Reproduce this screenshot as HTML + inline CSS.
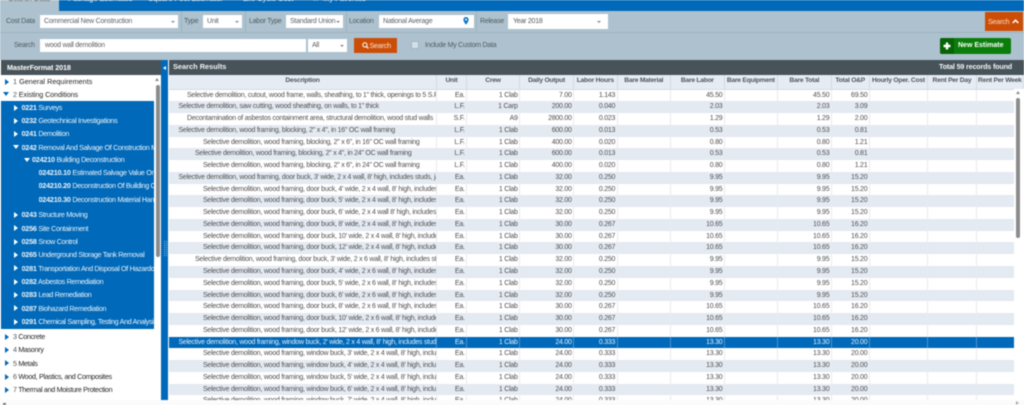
<!DOCTYPE html>
<html><head><meta charset="utf-8">
<style>
*{box-sizing:border-box}
html,body{margin:0;padding:0;width:1024px;height:405px;overflow:hidden;background:#fbfbfb}
body{font-family:"Liberation Sans",sans-serif;font-size:7px;letter-spacing:-.24px;color:#4f4f4f}
#w{position:absolute;left:0;top:0;width:1024px;height:405px;overflow:hidden;filter:blur(.4px)}
.a{position:absolute;white-space:nowrap}
.f{background:#fff;color:#5f5f5f;padding-left:4px;display:flex;align-items:center}
.c{position:absolute;right:3px;top:50%;margin-top:-1px;border:2px solid transparent;border-top:2.5px solid #888;border-bottom:0}
.l{color:#4f5a61;margin-top:1.5px}
.t{position:absolute;white-space:nowrap;font-size:7.2px;letter-spacing:-.33px;line-height:10px;height:10px;color:#262626}
.t b{font-weight:bold;letter-spacing:-.2px}
.t u{text-decoration:none;color:#555}
.ar{position:absolute;width:0;height:0;border:3px solid transparent;border-left:4px solid #0069b9;border-right:0}
.ad{position:absolute;width:0;height:0;border:3.5px solid transparent;border-top:4px solid #0069b9;border-bottom:0}
.wr{border-left-color:#fff}.wd{border-top-color:#fff}
#g{position:absolute;left:169px;top:75px;width:855px;height:325px;overflow:hidden}
.r{display:grid;grid-template-columns:268px 30px 53px 54px 43.5px 53.5px 53.7px 53.3px 53.7px 38px 58.5px 48.5px 47.3px;height:11.77px;line-height:11.77px;background:#fff;color:#505050}
.r:nth-child(even){background:#fff}
.r:nth-child(odd){background:#e4eaf2}
.r>*{display:block;font-style:normal;font-weight:normal;text-align:right;padding-right:1.3px;border-right:1px solid #e8ebef;overflow:hidden;white-space:nowrap}
.r>b{text-align:left;padding-right:0}
.h{height:14.5px!important;line-height:12.4px!important;background:#e6ecf4!important;color:#4d565c;border-bottom:1px solid #d5dbe2}
.h>*{text-align:center!important;font-weight:bold!important;padding:0!important;border-right:1px solid #d3d9e0;font-size:6.7px}
.s{background:#0069b9!important;color:#e4eef7!important}
.s>*{border-right-color:#4a93cc}
</style></head><body><div id="w">

<div class="a" style="left:0;top:0;width:1024px;height:11px;background:#0069b9"></div>
<div class="a" style="left:0;top:0;width:59px;height:11px;background:#adc2ce"></div>
<div class="a" style="left:8px;top:-6px;font-size:8px;line-height:9px;color:#444">Search Data</div>
<div class="a" style="left:68px;top:-6px;font-size:8px;line-height:9px;color:#dce9f4">Package Estimates</div>
<div class="a" style="left:148px;top:-6px;font-size:8px;line-height:9px;color:#dce9f4">Square Foot Estimator</div>
<div class="a" style="left:243px;top:-6px;font-size:8px;line-height:9px;color:#dce9f4">Life Cycle Cost</div>
<div class="a" style="left:312px;top:-6px;font-size:8px;line-height:9px;color:#dce9f4">★ &nbsp;My Favorites</div>

<div class="a" style="left:0;top:11px;width:1024px;height:49px;background:#adc2ce"></div>
<div class="a" style="left:0;top:32px;width:1024px;height:1px;background:#9cb4c1"></div>
<div class="a" style="left:181px;top:11px;width:1px;height:21px;background:#9cb4c1"></div>
<div class="a" style="left:245px;top:11px;width:1px;height:21px;background:#9cb4c1"></div>
<div class="a" style="left:346px;top:11px;width:1px;height:21px;background:#9cb4c1"></div>
<div class="a" style="left:476px;top:11px;width:1px;height:21px;background:#9cb4c1"></div>

<div class="a l" style="left:6px;top:14px;line-height:12px">Cost Data</div>
<div class="a f" style="left:40px;top:15px;width:138px;height:13px">Commercial New Construction<span class="c"></span></div>
<div class="a l" style="left:184px;top:14px;line-height:12px">Type</div>
<div class="a f" style="left:203px;top:15px;width:39px;height:13px">Unit<span class="c"></span></div>
<div class="a l" style="left:249px;top:14px;line-height:12px">Labor Type</div>
<div class="a f" style="left:286px;top:15px;width:57px;height:13px">Standard Union<span class="c"></span></div>
<div class="a l" style="left:349px;top:14px;line-height:12px">Location</div>
<div class="a f" style="left:379px;top:15px;width:95px;height:13px">National Average
<svg style="position:absolute;right:5px;top:2px" width="6" height="8" viewBox="0 0 6 8"><path d="M3 0a2.6 2.6 0 0 0-2.6 2.6C.4 4.6 3 7.6 3 7.6s2.6-3 2.6-5A2.6 2.6 0 0 0 3 0z" fill="#0a74c4"/><circle cx="3" cy="2.6" r="1" fill="#fff"/></svg></div>
<div class="a l" style="left:480px;top:14px;line-height:12px">Release</div>
<div class="a f" style="left:508px;top:14px;width:100px;height:15px;padding-left:5px;color:#555">Year 2018<span class="c" style="right:7px"></span></div>
<div class="a" style="left:985px;top:12px;width:38px;height:19px;background:#cc4e06;color:#f6d9c4;line-height:19px;font-size:7.2px;padding-left:3px">Search
<svg style="position:absolute;left:27px;top:7px" width="7" height="5" viewBox="0 0 7 5"><path d="M.7 4L3.5 1.2 6.3 4" fill="none" stroke="#fff" stroke-width="1.5"/></svg></div>

<div class="a l" style="left:14px;top:38.5px;line-height:12px">Search</div>
<div class="a f" style="left:40px;top:39px;width:266px;height:13px;padding-left:5px">wood wall demolition</div>
<div class="a f" style="left:308px;top:39px;width:39px;height:13px">All<span class="c"></span></div>
<div class="a" style="left:354px;top:38px;width:43px;height:15px;background:#cc4e06;color:#fbe4d4;line-height:15px;font-size:7.2px;padding-left:15.5px">Search
<svg style="position:absolute;left:8px;top:4px" width="7" height="7" viewBox="0 0 7 7"><circle cx="2.9" cy="2.9" r="2.1" fill="none" stroke="#fff" stroke-width="1"/><path d="M4.5 4.5L6.4 6.4" stroke="#fff" stroke-width="1.2"/></svg></div>
<div class="a" style="left:411px;top:41px;width:8px;height:8px;background:#d3dee6;border:1px solid #9fb6c4"></div>
<div class="a l" style="left:425px;top:38.5px;line-height:12px">Include My Custom Data</div>
<div class="a" style="left:940px;top:38px;width:71px;height:16px;background:#0a7d0a;border-radius:2px;color:#fff;font-weight:bold;letter-spacing:0;line-height:16px;padding-left:18px;font-size:7px">New Estimate
<div class="a" style="left:0;top:0;width:14px;height:16px;background:#066306;border-radius:2px 0 0 2px"></div>
<svg style="position:absolute;left:3px;top:4px" width="8" height="8" viewBox="0 0 8 8"><path d="M4 .5v7M.5 4h7" stroke="#fff" stroke-width="2.4"/></svg></div>

<!-- header bars -->
<div class="a" style="left:1px;top:60px;width:160px;height:15px;background:#475259;color:#fff;font-weight:bold;letter-spacing:-.1px;line-height:15px;padding-left:6px;font-size:7.2px">MasterFormat 2018</div>
<div class="a" style="left:169px;top:60px;width:855px;height:15px;background:#475259;color:#f2f5f6;font-weight:bold;letter-spacing:0;line-height:14px;padding-left:4px;font-size:7.4px">Search Results
<span class="a" style="right:12px;top:0;font-size:7.2px;letter-spacing:-.18px">Total 59 records found</span></div>

<!-- left tree -->
<div class="a" style="left:0;top:75px;width:161px;height:325px;background:#fff"></div>
<div class="a" style="left:1px;top:101px;width:153px;height:228px;background:#0069b9;overflow:hidden"></div>
<div class="a" style="left:161px;top:60px;width:7px;height:340px;background:#0069b9"></div>
<div class="a" style="left:163px;top:66px;width:0;height:0;border:2.5px solid transparent;border-right:3px solid #fff;border-left:0"></div>
<div class="a" style="left:164px;top:241px;width:1px;height:15px;border-left:1px dotted #7fb3dc"></div>
<div class="a" style="left:166px;top:241px;width:1px;height:15px;border-left:1px dotted #7fb3dc"></div>
<div class="a" style="left:155px;top:75px;width:6px;height:325px;background:#fff"></div>
<div class="a" style="left:155.5px;top:85px;width:4.5px;height:172px;background:#8b8b8b;border-radius:2px"></div>
<div class="a" style="left:155px;top:78px;width:0;height:0;border:2.2px solid transparent;border-bottom:3px solid #8b8b8b;border-top:0"></div>

<i class="ar" style="left:5px;top:79px"></i><div class="t" style="left:13px;top:77px;letter-spacing:.05px"><u>1</u> General Requirements</div>
<i class="ad" style="left:3px;top:92px"></i><div class="t" style="left:13px;top:90px;letter-spacing:-.1px"><u>2</u> Existing Conditions</div>

<i class="ar wr" style="left:14px;top:105px"></i><div class="t" style="left:21.5px;top:103px;color:#eaf3fa"><b>0221</b> Surveys</div>
<i class="ar wr" style="left:14px;top:118px"></i><div class="t" style="left:21.5px;top:116px;color:#eaf3fa"><b>0232</b> Geotechnical Investigations</div>
<i class="ar wr" style="left:14px;top:131px"></i><div class="t" style="left:21.5px;top:129px;color:#eaf3fa"><b>0241</b> Demolition</div>
<i class="ad wd" style="left:13px;top:145px"></i><div class="t" style="left:21.5px;top:143px;width:132px;overflow:hidden;color:#eaf3fa"><b>0242</b> Removal And Salvage Of Construction Materials</div>
<i class="ad wd" style="left:24px;top:158px"></i><div class="t" style="left:32px;top:155px;color:#eaf3fa"><b>024210</b> Building Deconstruction</div>
<div class="t" style="left:38.5px;top:167.5px;width:115px;overflow:hidden;color:#eaf3fa"><b>024210.10</b> Estimated Salvage Value Or Savings</div>
<div class="t" style="left:38.5px;top:181px;width:115px;overflow:hidden;color:#eaf3fa"><b>024210.20</b> Deconstruction Of Building Components</div>
<div class="t" style="left:38.5px;top:194.5px;width:115px;overflow:hidden;color:#eaf3fa"><b>024210.30</b> Deconstruction Material Handling</div>
<i class="ar wr" style="left:14px;top:212px"></i><div class="t" style="left:21.5px;top:210px;color:#eaf3fa"><b>0243</b> Structure Moving</div>
<i class="ar wr" style="left:14px;top:225px"></i><div class="t" style="left:21.5px;top:223.5px;color:#eaf3fa"><b>0256</b> Site Containment</div>
<i class="ar wr" style="left:14px;top:239px"></i><div class="t" style="left:21.5px;top:237px;color:#eaf3fa"><b>0258</b> Snow Control</div>
<i class="ar wr" style="left:14px;top:252px"></i><div class="t" style="left:21.5px;top:250px;color:#eaf3fa"><b>0265</b> Underground Storage Tank Removal</div>
<i class="ar wr" style="left:14px;top:265px"></i><div class="t" style="left:21.5px;top:263.5px;width:132px;overflow:hidden;color:#eaf3fa"><b>0281</b> Transportation And Disposal Of Hazardous Materials</div>
<i class="ar wr" style="left:14px;top:279px"></i><div class="t" style="left:21.5px;top:277px;color:#eaf3fa"><b>0282</b> Asbestos Remediation</div>
<i class="ar wr" style="left:14px;top:292px"></i><div class="t" style="left:21.5px;top:290px;color:#eaf3fa"><b>0283</b> Lead Remediation</div>
<i class="ar wr" style="left:14px;top:305px"></i><div class="t" style="left:21.5px;top:303.5px;color:#eaf3fa"><b>0287</b> Biohazard Remediation</div>
<i class="ar wr" style="left:14px;top:319px"></i><div class="t" style="left:21.5px;top:317px;width:132px;overflow:hidden;color:#eaf3fa"><b>0291</b> Chemical Sampling, Testing And Analysis</div>

<i class="ar" style="left:5px;top:334px"></i><div class="t" style="left:13px;top:332px"><u>3</u> Concrete</div>
<i class="ar" style="left:5px;top:347px"></i><div class="t" style="left:13px;top:345px"><u>4</u> Masonry</div>
<i class="ar" style="left:5px;top:360px"></i><div class="t" style="left:13px;top:358.5px"><u>5</u> Metals</div>
<i class="ar" style="left:5px;top:374px"></i><div class="t" style="left:13px;top:372px"><u>6</u> Wood, Plastics, and Composites</div>
<i class="ar" style="left:5px;top:387px"></i><div class="t" style="left:13px;top:385px"><u>7</u> Thermal and Moisture Protection</div>

<!-- grid -->
<div id="g">
<div class="r h"><b>Description</b><i>Unit</i><i>Crew</i><i>Daily Output</i><i>Labor Hours</i><i>Bare Material</i><i>Bare Labor</i><i>Bare Equipment</i><i>Bare Total</i><i>Total O&amp;P</i><i>Hourly Oper. Cost</i><i>Rent Per Day</i><i>Rent Per Week</i></div>
<div class="r"><b style="padding-left:18px">Selective demolition, cutout, wood frame, walls, sheathing, to 1" thick, openings to 5 S.F.</b><i>Ea.</i><i>1 Clab</i><i>7.00</i><i>1.143</i><i></i><i>45.50</i><i></i><i>45.50</i><i>69.50</i><i></i><i></i><i></i></div>
<div class="r"><b style="padding-left:9.5px">Selective demolition, saw cutting, wood sheathing, on walls, to 1" thick</b><i>L.F.</i><i>1 Carp</i><i>200.00</i><i>0.040</i><i></i><i>2.03</i><i></i><i>2.03</i><i>3.09</i><i></i><i></i><i></i></div>
<div class="r"><b style="padding-left:18px">Decontamination of asbestos containment area, structural demolition, wood stud walls</b><i>S.F.</i><i>A9</i><i>2800.00</i><i>0.023</i><i></i><i>1.29</i><i></i><i>1.29</i><i>2.00</i><i></i><i></i><i></i></div>
<div class="r"><b style="padding-left:9.5px">Selective demolition, wood framing, blocking, 2" x 4", in 16" OC wall framing</b><i>L.F.</i><i>1 Clab</i><i>600.00</i><i>0.013</i><i></i><i>0.53</i><i></i><i>0.53</i><i>0.81</i><i></i><i></i><i></i></div>
<div class="r"><b style="padding-left:34px">Selective demolition, wood framing, blocking, 2" x 6", in 16" OC wall framing</b><i>L.F.</i><i>1 Clab</i><i>400.00</i><i>0.020</i><i></i><i>0.80</i><i></i><i>0.80</i><i>1.21</i><i></i><i></i><i></i></div>
<div class="r"><b style="padding-left:26px">Selective demolition, wood framing, blocking, 2" x 4", in 24" OC wall framing</b><i>L.F.</i><i>1 Clab</i><i>600.00</i><i>0.013</i><i></i><i>0.53</i><i></i><i>0.53</i><i>0.81</i><i></i><i></i><i></i></div>
<div class="r"><b style="padding-left:34px">Selective demolition, wood framing, blocking, 2" x 6", in 24" OC wall framing</b><i>L.F.</i><i>1 Clab</i><i>400.00</i><i>0.020</i><i></i><i>0.80</i><i></i><i>0.80</i><i>1.21</i><i></i><i></i><i></i></div>
<div class="r"><b style="padding-left:9.5px">Selective demolition, wood framing, door buck, 3' wide, 2 x 4 wall, 8' high, includes studs, jack studs</b><i>Ea.</i><i>1 Clab</i><i>32.00</i><i>0.250</i><i></i><i>9.95</i><i></i><i>9.95</i><i>15.20</i><i></i><i></i><i></i></div>
<div class="r"><b style="padding-left:34px">Selective demolition, wood framing, door buck, 4' wide, 2 x 4 wall, 8' high, includes studs</b><i>Ea.</i><i>1 Clab</i><i>32.00</i><i>0.250</i><i></i><i>9.95</i><i></i><i>9.95</i><i>15.20</i><i></i><i></i><i></i></div>
<div class="r"><b style="padding-left:34px">Selective demolition, wood framing, door buck, 5' wide, 2 x 4 wall, 8' high, includes studs</b><i>Ea.</i><i>1 Clab</i><i>32.00</i><i>0.250</i><i></i><i>9.95</i><i></i><i>9.95</i><i>15.20</i><i></i><i></i><i></i></div>
<div class="r"><b style="padding-left:34px">Selective demolition, wood framing, door buck, 6' wide, 2 x 4 wall 8' high, includes studs</b><i>Ea.</i><i>1 Clab</i><i>32.00</i><i>0.250</i><i></i><i>9.95</i><i></i><i>9.95</i><i>15.20</i><i></i><i></i><i></i></div>
<div class="r"><b style="padding-left:34px">Selective demolition, wood framing, door buck, 8' wide, 2 x 4 wall, 8' high, includes studs</b><i>Ea.</i><i>1 Clab</i><i>30.00</i><i>0.267</i><i></i><i>10.65</i><i></i><i>10.65</i><i>16.20</i><i></i><i></i><i></i></div>
<div class="r"><b style="padding-left:34px">Selective demolition, wood framing, door buck, 10' wide, 2 x 4 wall, 8' high, includes studs</b><i>Ea.</i><i>1 Clab</i><i>30.00</i><i>0.267</i><i></i><i>10.65</i><i></i><i>10.65</i><i>16.20</i><i></i><i></i><i></i></div>
<div class="r"><b style="padding-left:34px">Selective demolition, wood framing, door buck, 12' wide, 2 x 4 wall, 8' high, includes studs</b><i>Ea.</i><i>1 Clab</i><i>30.00</i><i>0.267</i><i></i><i>10.65</i><i></i><i>10.65</i><i>16.20</i><i></i><i></i><i></i></div>
<div class="r"><b style="padding-left:26px">Selective demolition, wood framing, door buck, 3' wide, 2 x 6 wall, 8' high, includes studs</b><i>Ea.</i><i>1 Clab</i><i>32.00</i><i>0.250</i><i></i><i>9.95</i><i></i><i>9.95</i><i>15.20</i><i></i><i></i><i></i></div>
<div class="r"><b style="padding-left:34px">Selective demolition, wood framing, door buck, 4' wide, 2 x 6 wall, 8' high, includes studs</b><i>Ea.</i><i>1 Clab</i><i>32.00</i><i>0.250</i><i></i><i>9.95</i><i></i><i>9.95</i><i>15.20</i><i></i><i></i><i></i></div>
<div class="r"><b style="padding-left:34px">Selective demolition, wood framing, door buck, 5' wide, 2 x 6 wall, 8' high, includes studs</b><i>Ea.</i><i>1 Clab</i><i>32.00</i><i>0.250</i><i></i><i>9.95</i><i></i><i>9.95</i><i>15.20</i><i></i><i></i><i></i></div>
<div class="r"><b style="padding-left:34px">Selective demolition, wood framing, door buck, 6' wide, 2 x 6 wall, 8' high, includes studs</b><i>Ea.</i><i>1 Clab</i><i>32.00</i><i>0.250</i><i></i><i>9.95</i><i></i><i>9.95</i><i>15.20</i><i></i><i></i><i></i></div>
<div class="r"><b style="padding-left:34px">Selective demolition, wood framing, door buck, 8' wide, 2 x 6 wall, 8' high, includes studs</b><i>Ea.</i><i>1 Clab</i><i>30.00</i><i>0.267</i><i></i><i>10.65</i><i></i><i>10.65</i><i>16.20</i><i></i><i></i><i></i></div>
<div class="r"><b style="padding-left:34px">Selective demolition, wood framing, door buck, 10' wide, 2 x 6 wall, 8' high, includes studs</b><i>Ea.</i><i>1 Clab</i><i>30.00</i><i>0.267</i><i></i><i>10.65</i><i></i><i>10.65</i><i>16.20</i><i></i><i></i><i></i></div>
<div class="r"><b style="padding-left:34px">Selective demolition, wood framing, door buck, 12' wide, 2 x 6 wall, 8' high, includes studs</b><i>Ea.</i><i>1 Clab</i><i>30.00</i><i>0.267</i><i></i><i>10.65</i><i></i><i>10.65</i><i>16.20</i><i></i><i></i><i></i></div>
<div class="r s"><b style="padding-left:9.5px">Selective demolition, wood framing, window buck, 2' wide, 2 x 4 wall, 8' high, includes studs</b><i>Ea.</i><i>1 Clab</i><i>24.00</i><i>0.333</i><i></i><i>13.30</i><i></i><i>13.30</i><i>20.00</i><i></i><i></i><i></i></div>
<div class="r"><b style="padding-left:34px">Selective demolition, wood framing, window buck, 3' wide, 2 x 4 wall, 8' high, includes studs</b><i>Ea.</i><i>1 Clab</i><i>24.00</i><i>0.333</i><i></i><i>13.30</i><i></i><i>13.30</i><i>20.00</i><i></i><i></i><i></i></div>
<div class="r"><b style="padding-left:34px">Selective demolition, wood framing, window buck, 4' wide, 2 x 4 wall, 8' high, includes studs</b><i>Ea.</i><i>1 Clab</i><i>24.00</i><i>0.333</i><i></i><i>13.30</i><i></i><i>13.30</i><i>20.00</i><i></i><i></i><i></i></div>
<div class="r"><b style="padding-left:34px">Selective demolition, wood framing, window buck, 5' wide, 2 x 4 wall, 8' high, includes studs</b><i>Ea.</i><i>1 Clab</i><i>24.00</i><i>0.333</i><i></i><i>13.30</i><i></i><i>13.30</i><i>20.00</i><i></i><i></i><i></i></div>
<div class="r"><b style="padding-left:34px">Selective demolition, wood framing, window buck, 6' wide, 2 x 4 wall, 8' high, includes studs</b><i>Ea.</i><i>1 Clab</i><i>24.00</i><i>0.333</i><i></i><i>13.30</i><i></i><i>13.30</i><i>20.00</i><i></i><i></i><i></i></div>
<div class="r"><b style="padding-left:34px">Selective demolition, wood framing, window buck, 7' wide, 2 x 4 wall, 8' high, includes studs</b><i>Ea.</i><i>1 Clab</i><i>24.00</i><i>0.333</i><i></i><i>13.30</i><i></i><i>13.30</i><i>20.00</i><i></i><i></i><i></i></div>
</div>

<!-- right scrollbar -->
<div class="a" style="left:1014px;top:89px;width:10px;height:311px;background:#fff"></div>
<div class="a" style="left:1015.7px;top:98px;width:4.5px;height:140px;background:#8b8b8b;border-radius:2px"></div>
<div class="a" style="left:1015.7px;top:91px;width:0;height:0;border:2.2px solid transparent;border-bottom:3px solid #8b8b8b;border-top:0"></div>
<div class="a" style="left:0;top:400px;width:1024px;height:5px;background:#fbfbfb"></div>
<div class="a" style="left:1016px;top:401px;width:0;height:0;border:2px solid transparent;border-left:3px solid #aaa;border-right:0"></div>
<div class="a" style="left:3px;top:403px;width:3px;height:2px;background:#777"></div>
</div></body></html>
